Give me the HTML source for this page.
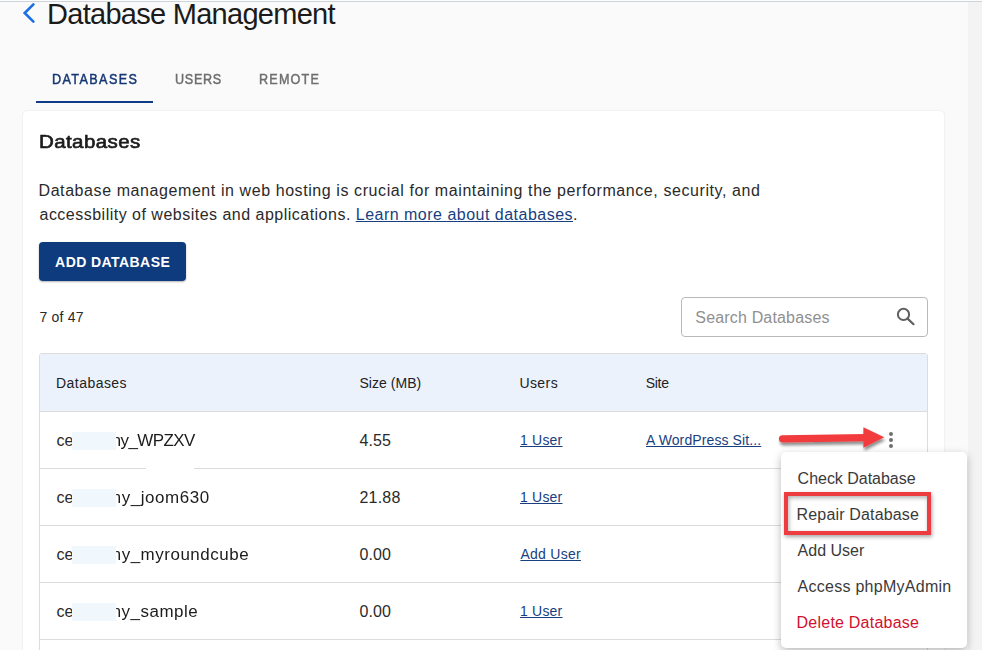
<!DOCTYPE html>
<html><head><meta charset="utf-8">
<style>
html,body{margin:0;padding:0;width:982px;height:650px;overflow:hidden;background:#fafafa;font-family:"Liberation Sans",sans-serif;}
.abs{position:absolute;}
.t{position:absolute;white-space:nowrap;font-family:"Liberation Sans",sans-serif;}
.t a{color:#193f80;text-decoration:underline;text-underline-offset:1px;text-decoration-thickness:1px;}
#topline{left:0;top:1px;width:982px;height:1px;background:#cdd3db;}
#top0{left:0;top:0;width:982px;height:1px;background:#fdfdfd;}
#scroll{left:968px;top:2px;width:14px;height:648px;background:#f3f3f3;}
#tabline{left:36px;top:101px;width:117px;height:2px;background:#0f3c86;}
#card{left:23px;top:111px;width:921px;height:600px;background:#fff;border-radius:4px;box-shadow:0 0 2px rgba(0,0,0,0.12);}
#btnbg{left:39px;top:242px;width:147px;height:39px;background:#0e3a7e;border-radius:4px;box-shadow:0 1px 2px rgba(0,0,0,0.3);}
#search{left:681px;top:297px;width:245px;height:38px;border:1px solid #b9b9b9;border-radius:4px;background:#fff;}
#table{left:39px;top:353px;width:887px;height:400px;border:1px solid #dcdcdc;border-radius:3px;background:#fff;}
#thead{left:40px;top:354px;width:887px;height:57px;background:#ebf2fc;border-radius:2px 2px 0 0;}
.rl{left:40px;width:887px;height:1px;background:#dcdcdc;}
.red{left:72px;width:44px;height:18px;background:#f0f8fe;}
.dot{width:4.4px;height:4.4px;border-radius:50%;background:#707070;}
#menu{left:781px;top:452px;width:186px;height:196px;background:#fff;border-radius:5px;box-shadow:0 3px 8px rgba(0,0,0,0.28);}
#hl{left:784px;top:492px;width:139px;height:35px;border:4px solid #ee3d41;box-shadow:1px 2px 4px rgba(0,0,0,0.35), inset 1px 2px 4px rgba(0,0,0,0.3);}
</style></head><body>
<div class="abs" id="top0"></div><div class="abs" id="topline"></div>
<div class="abs" id="scroll"></div>
<svg class="abs" style="left:20px;top:0px" width="20" height="26" viewBox="0 0 20 26"><polyline points="13.4,4.3 4.7,13 13.4,21.6" fill="none" stroke="#1b6ee6" stroke-width="2.6" stroke-linecap="round" stroke-linejoin="miter"/></svg>
<div class="abs" id="tabline"></div>
<div class="abs" id="card"></div>
<div class="abs" id="btnbg"></div>
<div class="abs" id="search"></div>
<svg class="abs" style="left:890px;top:302px" width="30" height="28" viewBox="0 0 30 28"><circle cx="13.5" cy="12.4" r="5.6" fill="none" stroke="#606060" stroke-width="2"/><line x1="17.6" y1="16.6" x2="23.5" y2="22.2" stroke="#606060" stroke-width="2.2" stroke-linecap="round"/></svg>
<div class="abs" id="table"></div>
<div class="abs" id="thead"></div>
<div class="abs rl" style="top:411px"></div>
<div class="abs rl" style="top:468px"></div>
<div class="abs" style="left:146px;top:467px;width:48px;height:3px;background:#fff"></div>
<div class="abs rl" style="top:525px"></div>
<div class="abs rl" style="top:582px"></div>
<div class="abs rl" style="top:639px"></div>
<div class="t" id="title" style="left:47.00px;top:-4.00px;font-size:29px;font-weight:400;color:#1b1b1b;line-height:36px;letter-spacing:-0.717px;">Database Management</div>
<div class="t" id="tab1" style="left:51.70px;top:70.40px;font-size:14px;font-weight:400;color:#143673;line-height:18px;letter-spacing:1.549px;-webkit-text-stroke:0.45px #143673;transform:scaleX(0.9);transform-origin:0 0;">DATABASES</div>
<div class="t" id="tab2" style="left:174.50px;top:70.40px;font-size:14px;font-weight:400;color:#6d6d6d;line-height:18px;letter-spacing:0.776px;-webkit-text-stroke:0.45px #6d6d6d;transform:scaleX(0.9);transform-origin:0 0;">USERS</div>
<div class="t" id="tab3" style="left:259.20px;top:70.40px;font-size:14px;font-weight:400;color:#6d6d6d;line-height:18px;letter-spacing:1.334px;-webkit-text-stroke:0.45px #6d6d6d;transform:scaleX(0.9);transform-origin:0 0;">REMOTE</div>
<div class="t" id="h2" style="left:39.32px;top:129.70px;font-size:19px;font-weight:400;color:#1b1b1b;line-height:24px;letter-spacing:0.361px;-webkit-text-stroke:0.65px #1b1b1b;transform:scaleX(1.08);transform-origin:0 0;">Databases</div>
<div class="t" id="p1" style="left:38.50px;top:181.00px;font-size:16px;font-weight:400;color:#2a2a2a;line-height:20px;letter-spacing:0.581px;">Database management in web hosting is crucial for maintaining the performance, security, and</div>
<div class="t" id="p2" style="left:39.50px;top:205.00px;font-size:16px;font-weight:400;color:#2a2a2a;line-height:20px;letter-spacing:0.488px;">accessbility of websites and applications. <a>Learn more about databases</a>.</div>
<div class="t" id="btn" style="left:55.10px;top:253.00px;font-size:14px;font-weight:700;color:#ffffff;line-height:18px;letter-spacing:0.429px;">ADD DATABASE</div>
<div class="t" id="count" style="left:39.50px;top:307.60px;font-size:14px;font-weight:400;color:#2a2a2a;line-height:18px;letter-spacing:0.195px;">7 of 47</div>
<div class="t" id="ph" style="left:695.30px;top:308.00px;font-size:16px;font-weight:400;color:#909090;line-height:20px;letter-spacing:0.171px;">Search Databases</div>
<div class="t" id="th1" style="left:56.00px;top:374.00px;font-size:14px;font-weight:400;color:#222222;line-height:18px;letter-spacing:0.459px;">Databases</div>
<div class="t" id="th2" style="left:359.40px;top:374.00px;font-size:14px;font-weight:400;color:#222222;line-height:18px;letter-spacing:0.052px;">Size (MB)</div>
<div class="t" id="th3" style="left:519.40px;top:374.00px;font-size:14px;font-weight:400;color:#222222;line-height:18px;letter-spacing:0.435px;">Users</div>
<div class="t" id="th4" style="left:645.70px;top:374.00px;font-size:14px;font-weight:400;color:#222222;line-height:18px;letter-spacing:-0.279px;">Site</div>
<div class="t" id="ce0" style="left:56.50px;top:431.00px;font-size:16px;font-weight:400;color:#2a2a2a;line-height:20px;letter-spacing:0.000px;">ce</div>
<div class="t" id="nm0" style="left:106.74px;top:431.00px;font-size:16px;font-weight:400;color:#1c1c1c;line-height:20px;letter-spacing:-0.530px;transform:scaleX(1.06);transform-origin:0 0;">my_WPZXV</div>
<div class="t" id="sz0" style="left:359.40px;top:431.00px;font-size:16px;font-weight:400;color:#2a2a2a;line-height:20px;letter-spacing:0.119px;">4.55</div>
<div class="t" id="us0" style="left:520.00px;top:431.00px;font-size:14px;font-weight:400;color:#193f80;line-height:18px;letter-spacing:0.206px;"><a>1 User</a></div>
<div class="t" id="ce1" style="left:56.50px;top:488.00px;font-size:16px;font-weight:400;color:#2a2a2a;line-height:20px;letter-spacing:0.000px;">ce</div>
<div class="t" id="nm1" style="left:106.74px;top:488.00px;font-size:16px;font-weight:400;color:#1c1c1c;line-height:20px;letter-spacing:0.530px;transform:scaleX(1.06);transform-origin:0 0;">my_joom630</div>
<div class="t" id="sz1" style="left:359.40px;top:488.00px;font-size:16px;font-weight:400;color:#2a2a2a;line-height:20px;letter-spacing:0.240px;">21.88</div>
<div class="t" id="us1" style="left:520.00px;top:488.00px;font-size:14px;font-weight:400;color:#193f80;line-height:18px;letter-spacing:0.206px;"><a>1 User</a></div>
<div class="t" id="ce2" style="left:56.50px;top:545.00px;font-size:16px;font-weight:400;color:#2a2a2a;line-height:20px;letter-spacing:0.000px;">ce</div>
<div class="t" id="nm2" style="left:106.74px;top:545.00px;font-size:16px;font-weight:400;color:#1c1c1c;line-height:20px;letter-spacing:0.497px;transform:scaleX(1.06);transform-origin:0 0;">my_myroundcube</div>
<div class="t" id="sz2" style="left:359.40px;top:545.00px;font-size:16px;font-weight:400;color:#2a2a2a;line-height:20px;letter-spacing:0.119px;">0.00</div>
<div class="t" id="us2" style="left:520.40px;top:545.00px;font-size:14px;font-weight:400;color:#193f80;line-height:18px;letter-spacing:0.272px;"><a>Add User</a></div>
<div class="t" id="ce3" style="left:56.50px;top:602.00px;font-size:16px;font-weight:400;color:#2a2a2a;line-height:20px;letter-spacing:0.000px;">ce</div>
<div class="t" id="nm3" style="left:106.74px;top:602.00px;font-size:16px;font-weight:400;color:#1c1c1c;line-height:20px;letter-spacing:0.465px;transform:scaleX(1.06);transform-origin:0 0;">my_sample</div>
<div class="t" id="sz3" style="left:359.40px;top:602.00px;font-size:16px;font-weight:400;color:#2a2a2a;line-height:20px;letter-spacing:0.119px;">0.00</div>
<div class="t" id="us3" style="left:520.00px;top:602.00px;font-size:14px;font-weight:400;color:#193f80;line-height:18px;letter-spacing:0.206px;"><a>1 User</a></div>
<div class="t" id="site0" style="left:646.00px;top:431.00px;font-size:14px;font-weight:400;color:#193f80;line-height:18px;letter-spacing:0.105px;"><a>A WordPress Sit...</a></div>
<div class="abs red" style="top:432px"></div>
<div class="abs red" style="top:489px"></div>
<div class="abs red" style="top:546px"></div>
<div class="abs red" style="top:603px"></div>
<div class="abs dot" style="left:888.5px;top:431.5px"></div>
<div class="abs dot" style="left:888.5px;top:437.5px"></div>
<div class="abs dot" style="left:888.5px;top:443.5px"></div>
<svg class="abs" style="left:770px;top:420px" width="125" height="40" viewBox="770 420 125 40">
<defs><filter id="sh" x="-20%" y="-50%" width="140%" height="200%"><feGaussianBlur in="SourceAlpha" stdDeviation="1.5"/><feOffset dx="1" dy="3" result="o"/><feComponentTransfer><feFuncA type="linear" slope="0.45"/></feComponentTransfer><feMerge><feMergeNode/><feMergeNode in="SourceGraphic"/></feMerge></filter></defs>
<g filter="url(#sh)"><line x1="782.5" y1="438.8" x2="866" y2="437.6" stroke="#f23b3e" stroke-width="7.2" stroke-linecap="round"/><polygon points="863.4,427.2 884.3,437.2 863.4,447.8" fill="#f23b3e"/></g>
</svg>
<div class="abs" id="menu"></div>
<div class="abs" id="hl"></div>
<div class="t" id="mn0" style="left:797.60px;top:469.00px;font-size:16px;font-weight:400;color:#3a3a3a;line-height:20px;letter-spacing:-0.022px;">Check Database</div>
<div class="t" id="mn1" style="left:796.60px;top:504.50px;font-size:16px;font-weight:400;color:#3a3a3a;line-height:20px;letter-spacing:0.159px;">Repair Database</div>
<div class="t" id="mn2" style="left:797.60px;top:541.00px;font-size:16px;font-weight:400;color:#3a3a3a;line-height:20px;letter-spacing:0.005px;">Add User</div>
<div class="t" id="mn3" style="left:797.60px;top:577.00px;font-size:16px;font-weight:400;color:#3a3a3a;line-height:20px;letter-spacing:0.263px;">Access phpMyAdmin</div>
<div class="t" id="mn4" style="left:796.60px;top:613.00px;font-size:16px;font-weight:400;color:#d01130;line-height:20px;letter-spacing:0.222px;">Delete Database</div>
</body></html>
